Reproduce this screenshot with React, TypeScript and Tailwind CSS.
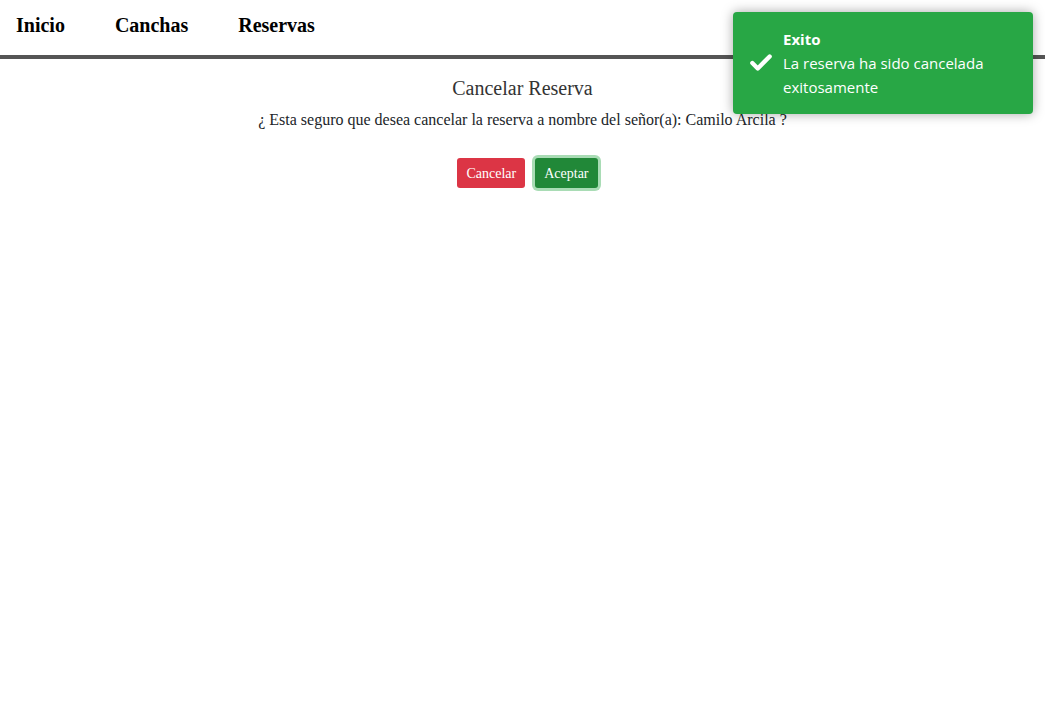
import { Check } from 'lucide-react';

const serif = { fontFamily: '"Liberation Serif", "Times New Roman", serif' };

const App = () => {
  return (
    <div className="min-h-screen bg-white relative" style={serif}>
      <nav className="h-[59px] border-b-4 border-[#555555] flex items-center pl-4 gap-[50px] pb-[6px]">
        <a className="text-[20px] font-bold text-black">Inicio</a>
        <a className="text-[20px] font-bold text-black">Canchas</a>
        <a className="text-[20px] font-bold text-black">Reservas</a>
      </nav>
      <main className="flex flex-col items-center text-[#212529]">
        <h2 className="text-[20px] mt-[17px] leading-[24px] text-[#333]">Cancelar Reserva</h2>
        <p className="text-[16px] mt-[10px] leading-[20px]">
          ¿ Esta seguro que desea cancelar la reserva a nombre del señor(a): Camilo Arcila ?
        </p>
        <div className="flex gap-[10px] mt-[28px] ml-[10px]">
          <button className="h-[30px] px-[9px] rounded-[3px] bg-[#dc3545] text-white text-[14px]">Cancelar</button>
          <button className="h-[30px] px-[9px] rounded-[3px] bg-[#218838] text-white text-[14px] ring-[3px] ring-[#28a745]/40">Aceptar</button>
        </div>
      </main>
      <div
        className="absolute top-[12px] right-[12px] w-[300px] h-[102px] bg-[#28a745] rounded-[4px] shadow-[0_0_12px_rgba(0,0,0,0.35)] flex items-center pl-[15px] text-white"
        style={{ fontFamily: '"Open Sans", "Noto Sans", sans-serif' }}
      >
        <Check className="w-[26px] h-[26px] mr-[9px] shrink-0" strokeWidth={4} />
        <div className="text-[15px] leading-[24px]">
          <div className="font-bold">Exito</div>
          <div>La reserva ha sido cancelada exitosamente</div>
        </div>
      </div>
    </div>
  );
};

export default App;
